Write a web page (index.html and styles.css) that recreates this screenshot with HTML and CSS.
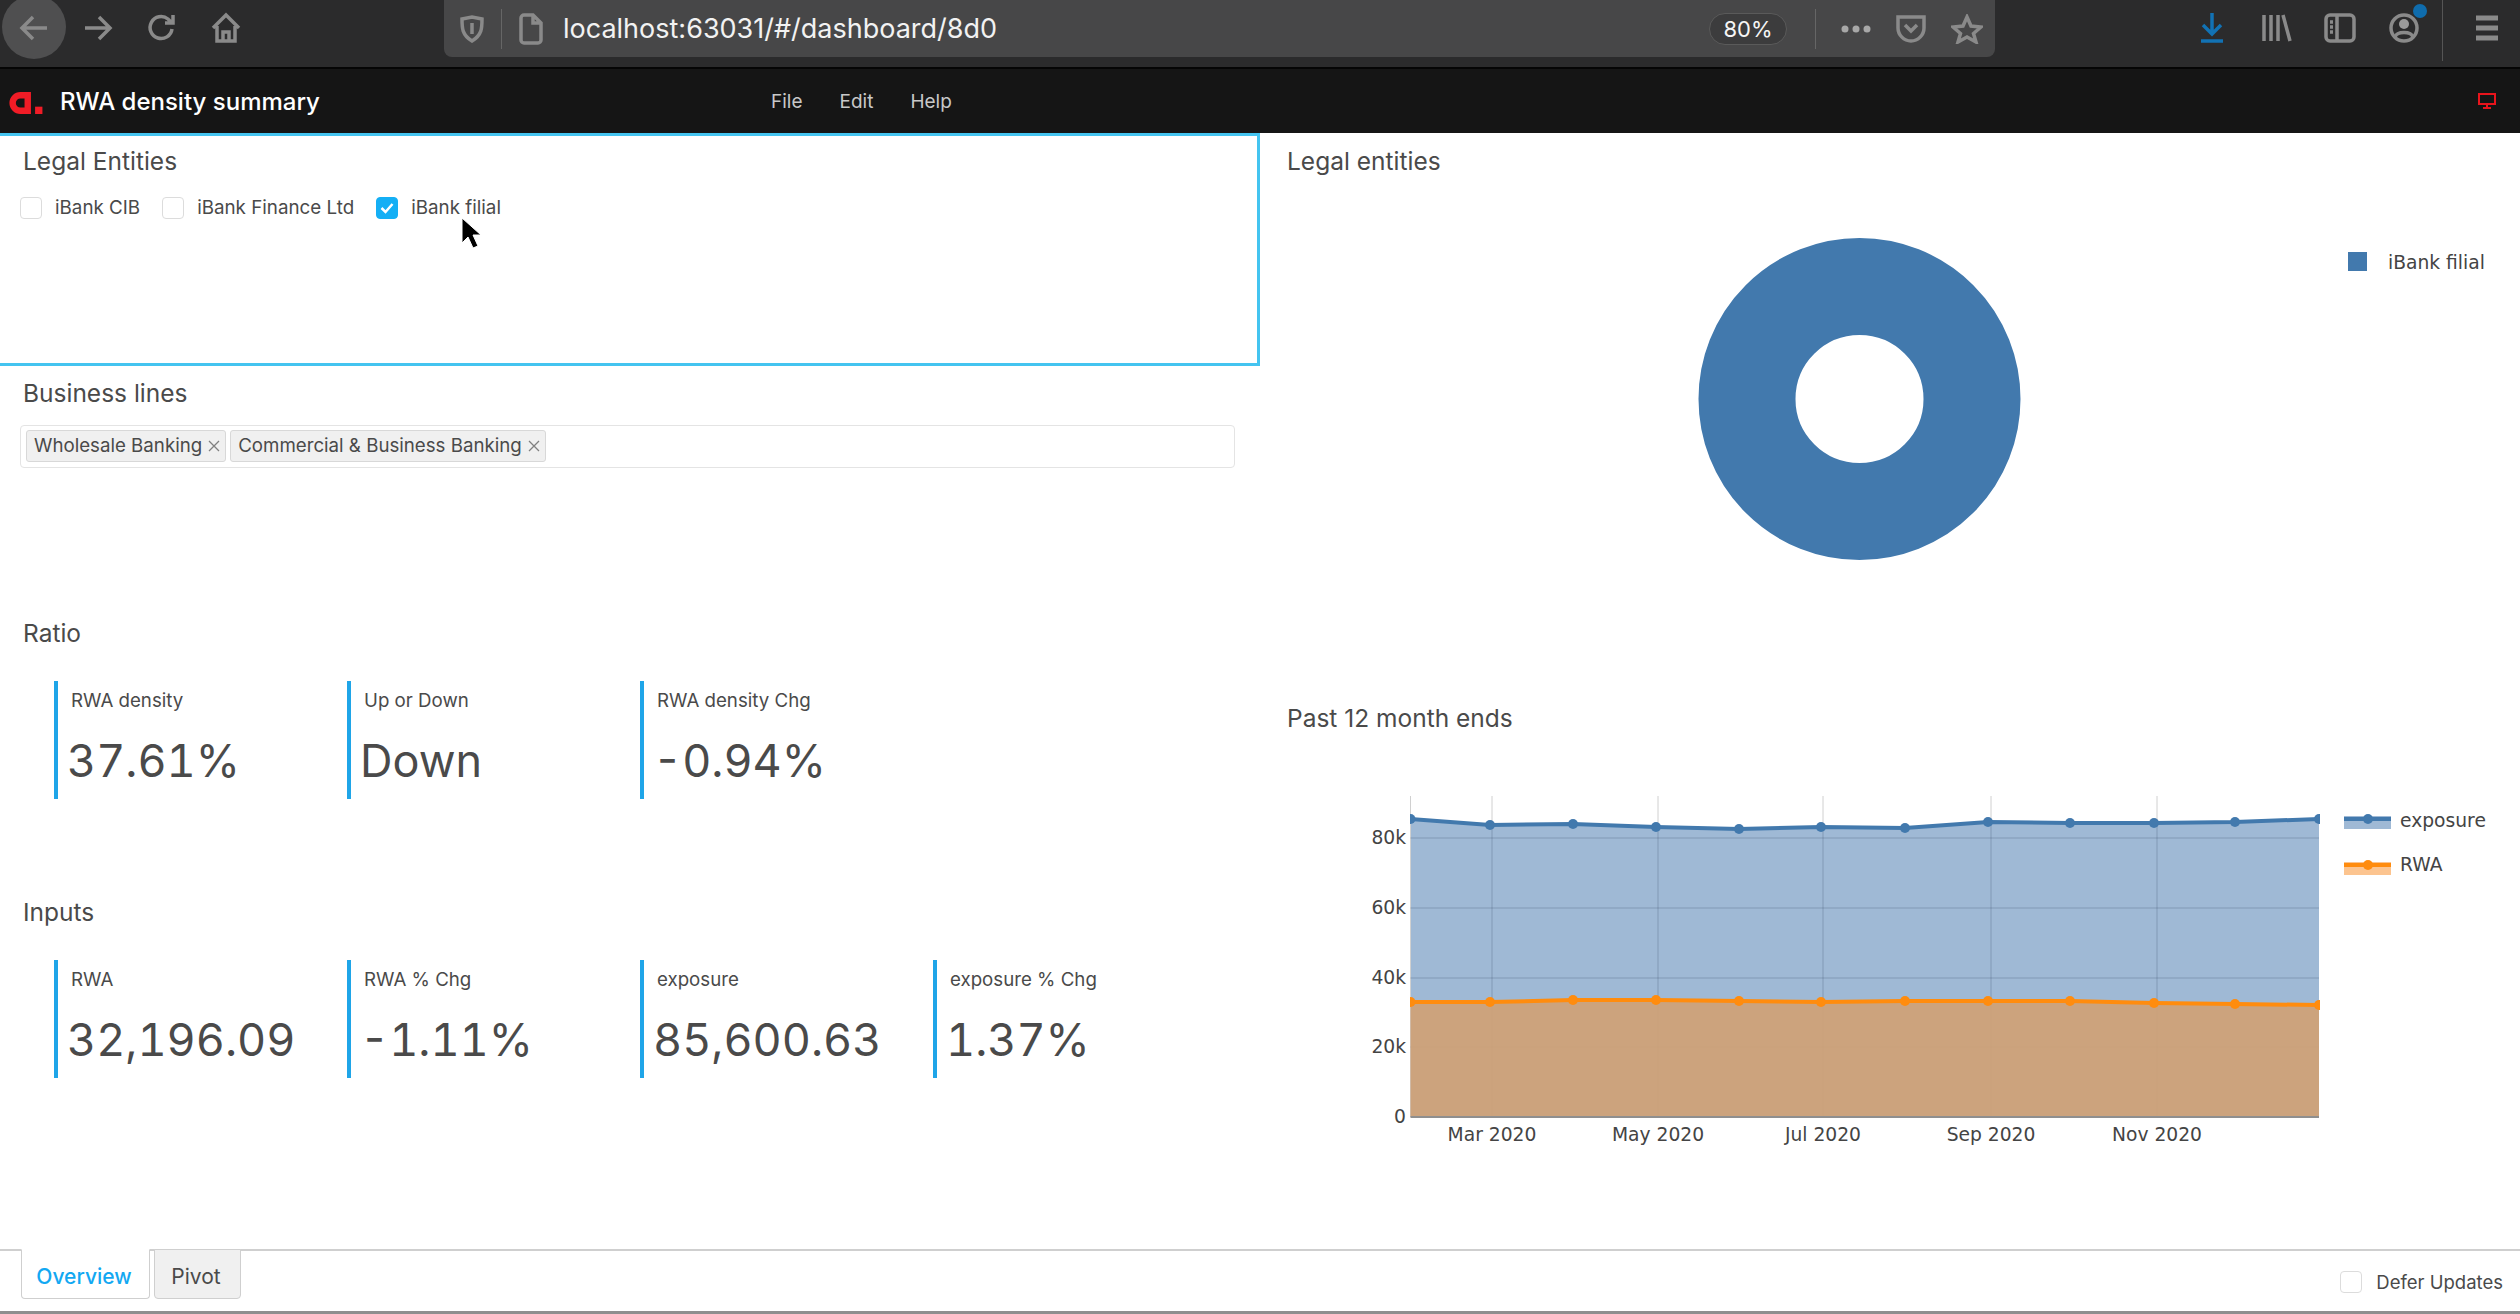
FILE: index.html
```html
<!DOCTYPE html>
<html lang="en">
<head>
    <meta charset="UTF-8">
    <title>RWA density summary</title>
    <link rel="stylesheet" href="styles.css">
</head>
<body>
    <!-- Browser toolbar -->
    <div class="browser-bar">
        <div class="nav-buttons">
            <span class="tool back-btn">
                <svg width="32" height="32" viewBox="0 0 32 32"><path d="M29 16H5M15 5L4 16l11 11" class="ico"/></svg>
            </span>
            <span class="tool">
                <svg width="32" height="32" viewBox="0 0 32 32"><path d="M3 16h24M17 5l11 11-11 11" class="ico"/></svg>
            </span>
            <span class="tool">
                <svg width="32" height="32" viewBox="0 0 32 32"><path d="M26 17a11 11 0 1 1-4-10l4 4M27 3v8h-8" class="ico"/></svg>
            </span>
            <span class="tool">
                <svg width="32" height="32" viewBox="0 0 32 32"><path d="M3 16L16 3l13 13M7 14v15h18V14M13 29v-9h6v9" class="ico"/></svg>
            </span>
        </div>
        <div class="url-bar">
            <svg class="url-shield" width="24" height="28" viewBox="0 0 24 28"><path d="M2 4l10-2 10 2c0 9 0 16-10 22C2 20 2 13 2 4z" class="ico"/><path d="M12 8v11" class="ico"/></svg>
            <span class="url-sep"></span>
            <svg class="url-page" width="26" height="32" viewBox="0 0 26 32"><path d="M3 5a3 3 0 0 1 3-3h9l8 8v17a3 3 0 0 1-3 3H6a3 3 0 0 1-3-3zM15 2v8h8" class="ico"/></svg>
            <span class="url-text">localhost:63031/#/dashboard/8d0</span>
            <span class="zoom-pill">80%</span>
            <span class="url-sep sep-right"></span>
            <svg class="url-dots" width="32" height="10" viewBox="0 0 32 10"><circle cx="5" cy="5" r="3.500"/><circle cx="16" cy="5" r="3.500"/><circle cx="27" cy="5" r="3.500"/></svg>
            <svg class="url-pocket" width="32" height="30" viewBox="0 0 32 30"><path d="M3 3h26v11c0 7-6 13-13 13S3 21 3 14zM10 11l6 6 6-6" class="ico"/></svg>
            <svg class="url-star" width="32" height="30" viewBox="0 0 32 30"><path d="M16 3l4 9 10 1-7.500 6.500L25 28l-9-5-9 5 2.500-8.500L2 13l10-1z" class="ico"/></svg>
        </div>
        <div class="right-tools">
            <svg width="28" height="32" viewBox="0 0 28 32"><path d="M14 1v21M5 13l9 9 9-9" class="ico ico-blue"/><path d="M3 29h22" class="ico ico-blue"/></svg>
            <svg class="lib" width="32" height="30" viewBox="0 0 32 30"><path d="M3 2v26M10 2v26M17 2v26M22 2l7 26" class="ico"/></svg>
            <svg width="32" height="32" viewBox="0 0 32 32"><rect x="2" y="3" width="28" height="26" rx="4" class="ico"/><path d="M13 3v26M6 10h3M6 15h3M6 20h3" class="ico"/></svg>
            <span class="account">
                <svg width="30" height="32" viewBox="0 0 30 32"><circle cx="15" cy="16" r="13" class="ico"/><circle cx="15" cy="12" r="5" fill="#9a9a9a"/><path d="M6 25c2-6 16-6 18 0" class="ico"/></svg>
                <span class="account-badge"></span>
            </span>
            <span class="tool-sep"></span>
            <svg class="menu-ico" width="26" height="26" viewBox="0 0 26 26"><path d="M2 3h22M2 13h22M2 23h22" class="ico ico-fat"/></svg>
        </div>
    </div>

    <!-- App header -->
    <div class="app-bar">
        <svg class="logo" width="38" height="22" viewBox="0 0 40 24">
            <path d="M15 3.500a8.500 8.500 0 1 0 0 17h8V3.500z" fill="none" stroke="#f01c26" stroke-width="7"/>
            <rect x="31" y="16" width="8" height="8" fill="#f01c26"/>
        </svg>
        <span class="app-title">RWA density summary</span>
        <nav class="app-menu">
            <span>File</span>
            <span>Edit</span>
            <span>Help</span>
        </nav>
        <svg class="monitor" width="18" height="16" viewBox="0 0 18 16"><rect x="1" y="1" width="16" height="10" fill="none" stroke="#e8141c" stroke-width="2"/><path d="M9 11v3M5 15h8" stroke="#e8141c" stroke-width="2"/></svg>
    </div>

    <div class="dashboard">
        <div class="left-col">
            <section class="panel panel-legal">
                <h2 class="panel-title">Legal Entities</h2>
                <div class="check-row">
                    <label class="check"><span class="box"></span>iBank CIB</label>
                    <label class="check"><span class="box"></span>iBank Finance Ltd</label>
                    <label class="check">
                        <span class="box box-on">
                            <svg width="14" height="12" viewBox="0 0 14 12"><path d="M1.500 6l4 4 7-8" fill="none" stroke="#fff" stroke-width="2.500"/></svg>
                        </span>
                        iBank filial
                    </label>
                </div>
                <svg class="cursor" width="24" height="34" viewBox="0 0 24 34"><path d="M2 1v25l6-6 5 11 5-2-5-11h8z" fill="#000" stroke="#fff" stroke-width="1"/></svg>
            </section>

            <section class="panel panel-lines">
                <h2 class="panel-title">Business lines</h2>
                <div class="tag-input">
                    <span class="tag">Wholesale Banking<svg class="tag-x" width="12" height="12" viewBox="0 0 12 12"><path d="M1 1l10 10M11 1L1 11"/></svg></span>
                    <span class="tag">Commercial &amp; Business Banking<svg class="tag-x" width="12" height="12" viewBox="0 0 12 12"><path d="M1 1l10 10M11 1L1 11"/></svg></span>
                </div>
            </section>

            <section class="panel panel-ratio">
                <h2 class="panel-title">Ratio</h2>
                <div class="stats">
                    <div class="stat"><div class="stat-label">RWA density</div><div class="stat-value">37.61%</div></div>
                    <div class="stat"><div class="stat-label">Up or Down</div><div class="stat-value">Down</div></div>
                    <div class="stat"><div class="stat-label">RWA density Chg</div><div class="stat-value">-0.94%</div></div>
                </div>
            </section>

            <section class="panel panel-inputs">
                <h2 class="panel-title">Inputs</h2>
                <div class="stats">
                    <div class="stat"><div class="stat-label">RWA</div><div class="stat-value">32,196.09</div></div>
                    <div class="stat"><div class="stat-label">RWA % Chg</div><div class="stat-value">-1.11%</div></div>
                    <div class="stat"><div class="stat-label">exposure</div><div class="stat-value">85,600.63</div></div>
                    <div class="stat"><div class="stat-label">exposure % Chg</div><div class="stat-value">1.37%</div></div>
                </div>
            </section>
        </div>

        <div class="right-col">
            <section class="panel-donut">
                <h2 class="panel-title">Legal entities</h2>
                <svg class="plot" width="1260" height="513" viewBox="1260 177 1260 513">
                    <circle cx="1859.500" cy="399" r="112.500" fill="none" stroke="#4279ad" stroke-width="97"/>
                    <rect x="2348" y="252" width="19" height="19" fill="#4279ad"/>
                    <text x="2388" y="269" class="plot-text">iBank filial</text>
                </svg>
            </section>

            <section class="panel-trend">
                <h2 class="panel-title">Past 12 month ends</h2>
                <svg class="plot" width="1260" height="440" viewBox="1260 733 1260 440">
                    <defs>
                        <clipPath id="plot-area"><rect x="1410" y="780" width="910" height="340"/></clipPath>
                    </defs>
                    <!-- exposure area -->
                    <path d="M1410.500 1116V818L1490 824 1573 823 1656 826 1739 828 1821 826 1905 827 1988 821 2070 822 2154 822 2235 821 2319 818V1116z" fill="#9fb9d5"/>
                    <g class="grid-top">
                        <path d="M1410.500 795V1116M1492 795V824M1658 795V826M1823 795V826M1991 795V821M2157 795V822"/>
                    </g>
                    <g class="grid-in">
                        <path d="M1492 824V1116M1658 826V1116M1823 826V1116M1991 821V1116M2157 822V1116"/>
                        <path d="M1410.500 837H2319M1410.500 907H2319M1410.500 977H2319M1410.500 1046H2319"/>
                    </g>
                    <!-- RWA area, grid shows through faintly -->
                    <path d="M1410.500 1116V1001L1490 1001 1573 999 1656 999 1739 1000 1821 1001 1905 1000 1988 1000 2070 1000 2154 1002 2235 1003 2319 1004V1116z" fill="#d0a176" fill-opacity="0.93"/>
                    <path d="M1410.500 1116H2319" stroke="#8f8f8f" stroke-width="2"/>

                    <g clip-path="url(#plot-area)">
                        <polyline class="line-exp" points="1410.500,818 1490,824 1573,823 1656,826 1739,828 1821,826 1905,827 1988,821 2070,822 2154,822 2235,821 2319,818"/>
                        <polyline class="line-rwa" points="1410.500,1001 1490,1001 1573,999 1656,999 1739,1000 1821,1001 1905,1000 1988,1000 2070,1000 2154,1002 2235,1003 2319,1004"/>
                        <g fill="#4279ad">
                            <circle cx="1410.500" cy="818" r="5"/><circle cx="1490" cy="824" r="5"/><circle cx="1573" cy="823" r="5"/><circle cx="1656" cy="826" r="5"/><circle cx="1739" cy="828" r="5"/><circle cx="1821" cy="826" r="5"/><circle cx="1905" cy="827" r="5"/><circle cx="1988" cy="821" r="5"/><circle cx="2070" cy="822" r="5"/><circle cx="2154" cy="822" r="5"/><circle cx="2235" cy="821" r="5"/><circle cx="2319" cy="818" r="5"/>
                        </g>
                        <g fill="#ff8c0e">
                            <circle cx="1410.500" cy="1001" r="5"/><circle cx="1490" cy="1001" r="5"/><circle cx="1573" cy="999" r="5"/><circle cx="1656" cy="999" r="5"/><circle cx="1739" cy="1000" r="5"/><circle cx="1821" cy="1001" r="5"/><circle cx="1905" cy="1000" r="5"/><circle cx="1988" cy="1000" r="5"/><circle cx="2070" cy="1000" r="5"/><circle cx="2154" cy="1002" r="5"/><circle cx="2235" cy="1003" r="5"/><circle cx="2319" cy="1004" r="5"/>
                        </g>
                    </g>

                    <g class="plot-text tick-y">
                        <text x="1406" y="843">80k</text>
                        <text x="1406" y="913">60k</text>
                        <text x="1406" y="983">40k</text>
                        <text x="1406" y="1052">20k</text>
                        <text x="1406" y="1122">0</text>
                    </g>
                    <g class="plot-text tick-x">
                        <text x="1492" y="1140">Mar 2020</text>
                        <text x="1658" y="1140">May 2020</text>
                        <text x="1823" y="1140">Jul 2020</text>
                        <text x="1991" y="1140">Sep 2020</text>
                        <text x="2157" y="1140">Nov 2020</text>
                    </g>

                    <!-- legend -->
                    <rect x="2344" y="815" width="47" height="13" fill="#9fb9d5"/>
                    <path class="line-exp" d="M2344 818H2391"/>
                    <circle cx="2368" cy="818" r="5" fill="#4279ad"/>
                    <text x="2400" y="826" class="plot-text">exposure</text>
                    <rect x="2344" y="861" width="47" height="13" fill="#fcc48f"/>
                    <path class="line-rwa" d="M2344 864H2391"/>
                    <circle cx="2368" cy="864" r="5" fill="#ff8c0e"/>
                    <text x="2400" y="870" class="plot-text">RWA</text>
                </svg>
            </section>
        </div>
    </div>

    <div class="tab-bar">
        <div class="tab tab-active">Overview</div>
        <div class="tab tab-pivot">Pivot</div>
        <label class="defer"><span class="box"></span>Defer Updates</label>
    </div>
</body>
</html>
```

FILE: styles.css
```css
* { box-sizing: border-box; }
html, body { height: 100%; }
body {
    margin: 0;
    height: 1314px;
    overflow: hidden;
    display: flex;
    flex-direction: column;
    font-family: Inter, "Liberation Sans", sans-serif;
    color: #4a4a4a;
    background: #fff;
}

/* browser toolbar */
.browser-bar {
    height: 69px;
    flex: none;
    display: flex;
    align-items: flex-start;
    background: #2b2b2c;
    border-bottom: 2px solid #050505;
    overflow: hidden;
}
.ico { fill: none; stroke: #8a8a8a; stroke-width: 3.500; }
.ico-blue { stroke: #1272b4; }
.ico-fat { stroke-width: 5; }
.nav-buttons { width: 444px; height: 56px; display: flex; align-items: center; padding-left: 18px; }
.tool { width: 64px; display: flex; align-items: center; }
.back-btn { position: relative; }
.back-btn::before {
    content: "";
    position: absolute;
    left: -16px;
    top: -17px;
    width: 64px;
    height: 64px;
    border-radius: 50%;
    background: #4f4f50;
}
.back-btn svg { position: relative; }
.url-bar {
    width: 1551px;
    height: 57px;
    background: #474748;
    border-radius: 0 0 8px 8px;
    display: flex;
    align-items: center;
    padding-left: 16px;
}
.url-sep { width: 1px; height: 40px; background: #666; margin: 0 16px 0 17px; }
.url-shield { flex: none; }
.url-page { flex: none; }
.url-text { margin-left: 19px; font-size: 27px; color: #f2f2f2; width: 1146px; white-space: nowrap; }
.zoom-pill {
    width: 78px;
    height: 32px;
    line-height: 30px;
    text-align: center;
    border: 1px solid #5a5a5a;
    border-radius: 16px;
    background: #3c3c3d;
    color: #f5f5f5;
    font-size: 22px;
}
.sep-right { margin: 0 24px 0 28px; }
.url-dots { fill: #a8a8a8; }
.url-pocket { margin-left: 23px; }
.url-star { margin-left: 24px; }
.right-tools {
    flex: 1;
    height: 56px;
    display: flex;
    align-items: center;
    gap: 33px;
    padding-left: 203px;
}
.lib { margin-left: 2px; margin-right: -2px; }
.account { position: relative; display: flex; }
.account-badge {
    position: absolute;
    right: -8px;
    top: -8px;
    width: 14px;
    height: 14px;
    border-radius: 50%;
    background: #0f6cad;
}
.tool-sep { width: 1px; height: 66px; background: #555; margin: 0 0 0 -10px; }
.menu-ico { margin-left: -2px; }

/* app header */
.app-bar {
    height: 64px;
    flex: none;
    display: flex;
    align-items: center;
    background: #151515;
    padding: 0 24px 0 6px;
}
.logo { flex: none; margin: 3px 2px 0 0; }
.app-title { margin-left: 14px; width: 711px; color: #fff; font-size: 24px; font-weight: 500; white-space: nowrap; }
.app-menu { display: flex; gap: 37px; color: #c8c8c8; font-size: 19px; flex: 1; }
.monitor { flex: none; }

/* main grid */
.dashboard { flex: 1; display: grid; grid-template-columns: 1260px 1fr; min-height: 0; }
.left-col, .right-col { min-width: 0; }
.panel { padding: 11px 0 0 0; }
.panel-title {
    margin: 0 0 0 23px;
    height: 32px;
    line-height: 32px;
    font-size: 24.500px;
    font-weight: 400;
    color: #4a4a4a;
}
.panel-legal {
    position: relative;
    height: 233px;
    border: solid #44c4f0;
    border-width: 3px 3px 3px 0;
    padding-top: 9px;
}
.panel-lines { height: 240px; }
.panel-ratio { height: 279px; }
.panel-inputs { height: 364px; }

/* checkboxes */
.check-row { display: flex; margin: 19px 0 0 20px; gap: 22px; }
.check { display: flex; align-items: center; gap: 13px; font-size: 18.800px; line-height: 24px; color: #4a4a4a; }
.box {
    width: 22px;
    height: 22px;
    flex: none;
    display: flex;
    align-items: center;
    justify-content: center;
    border: 1px solid #dcdcdc;
    border-radius: 4px;
    background: #fff;
}
.box-on { background: #14aff5; border-color: #14aff5; }
.cursor { position: absolute; left: 460px; top: 81px; }

/* tag input */
.tag-input {
    margin: 16px 25px 0 20px;
    height: 43px;
    border: 1px solid #e4e4e4;
    border-radius: 4px;
    display: flex;
    align-items: center;
    gap: 4px;
    padding: 0 0 2px 5px;
}
.tag {
    height: 32px;
    display: flex;
    align-items: center;
    gap: 6px;
    padding: 0 5px 0 7px;
    background: #f0f0f0;
    border: 1px solid #d8d8d8;
    border-radius: 3px;
    font-size: 18.700px;
    white-space: nowrap;
}
.tag-x { fill: none; stroke: #808080; stroke-width: 1.300; }

/* stat cards */
.stats { display: flex; margin: 32px 0 0 54px; }
.stat {
    width: 293px;
    height: 118px;
    border-left: 4px solid #1fa5e8;
    padding: 8px 0 0 13px;
}
.stat-label { height: 24px; line-height: 24px; font-size: 18.700px; }
.stat-value {
    margin: 20px 0 0 -4px;
    height: 56px;
    line-height: 56px;
    font-size: 45px;
    font-variant-numeric: tabular-nums;
    white-space: nowrap;
}

/* right column plots */
.panel-donut { height: 557px; padding-top: 12px; }
.panel-trend { padding-top: 12px; }
.right-col .panel-title { margin-left: 27px; }
.plot { display: block; }
.plot-text { font-family: "DejaVu Sans", sans-serif; font-size: 18.700px; fill: #444; }
.tick-y { text-anchor: end; }
.tick-x { text-anchor: middle; }
.grid-top path { stroke: #d0d0d0; stroke-width: 1; fill: none; }
.grid-in path { stroke: rgba(60, 80, 110, 0.3); stroke-width: 1; fill: none; }
.line-exp { fill: none; stroke: #4279ad; stroke-width: 4; }
.line-rwa { fill: none; stroke: #ff8c0e; stroke-width: 4; }

/* bottom tabs */
.tab-bar {
    height: 65px;
    flex: none;
    display: flex;
    align-items: flex-start;
    gap: 4px;
    padding-left: 21px;
    border-top: 2px solid #cfcfcf;
    border-bottom: 3px solid #8e8e8e;
    background: #fff;
}
.tab {
    height: 50px;
    margin-top: -2px;
    text-align: center;
    line-height: 53px;
    font-size: 21px;
    border: 1px solid #cfcfcf;
    border-radius: 0 0 4px 4px;
    background: #f0f0f0;
}
.tab-pivot { width: 87px; padding-right: 3px; }
.tab-active { width: 129px; padding-right: 3px; background: #fff; color: #13a8f2; font-weight: 500; border-top-color: #fff; }
.defer {
    margin-left: auto;
    margin-right: 17px;
    margin-top: 20px;
    display: flex;
    align-items: center;
    gap: 14px;
    font-size: 18.500px;
}
```
